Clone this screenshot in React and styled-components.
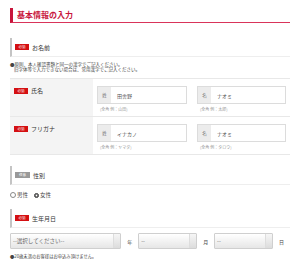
import React from "react";
import styled, { createGlobalStyle } from "styled-components";

const GlobalStyle = createGlobalStyle`
  html, body {
    margin: 0;
    padding: 0;
    background: #fff;
  }
  body {
    font-family: "Noto Sans CJK JP", "Noto Sans", sans-serif;
    color: #333;
  }
`;

const nameRows = [
  {
    label: "氏名",
    fields: [
      { prefix: "姓", value: "田舎野", hint: "(全角 例：山田)" },
      { prefix: "名", value: "ナオミ", hint: "(全角 例：太郎)" },
    ],
  },
  {
    label: "フリガナ",
    fields: [
      { prefix: "姓", value: "イナカノ", hint: "(全角 例：ヤマダ)" },
      { prefix: "名", value: "ナオミ", hint: "(全角 例：タロウ)" },
    ],
  },
];

function App() {
  return (
    <>
      <GlobalStyle />
      <StyledPage>
        <StyledTitle>基本情報の入力</StyledTitle>

        <StyledSectionHead $top={15}>
          <StyledBadge>必須</StyledBadge>
          お名前
        </StyledSectionHead>
        <StyledNotes>
          <p>●原則、本人確認書類と同一の漢字でご記入ください。</p>
          <p>旧字体等で入力できない場合は、常用漢字でご記入ください。</p>
        </StyledNotes>

        <StyledTable>
          {nameRows.map((row) => (
            <StyledRow key={row.label}>
              <StyledLabelCell>
                <StyledBadge>必須</StyledBadge>
                {row.label}
              </StyledLabelCell>
              <StyledFieldCell>
                {row.fields.map((field) => (
                  <div key={field.prefix}>
                    <StyledInput>
                      <StyledPrefix>{field.prefix}</StyledPrefix>
                      <StyledValue>{field.value}</StyledValue>
                    </StyledInput>
                    <StyledHint>{field.hint}</StyledHint>
                  </div>
                ))}
              </StyledFieldCell>
            </StyledRow>
          ))}
        </StyledTable>

        <StyledSectionHead $top={11}>
          <StyledBadge $optional>任意</StyledBadge>
          性別
        </StyledSectionHead>
        <StyledRadios>
          <StyledRadioLabel>
            <StyledRadio />
            男性
          </StyledRadioLabel>
          <StyledRadioLabel>
            <StyledRadio $checked />
            女性
          </StyledRadioLabel>
        </StyledRadios>

        <StyledSectionHead $top={10}>
          <StyledBadge>必須</StyledBadge>
          生年月日
        </StyledSectionHead>
        <StyledSelects>
          <StyledSelect $width={113}>--選択してください--</StyledSelect>
          <StyledUnit>年</StyledUnit>
          <StyledSelect $width={60}>--</StyledSelect>
          <StyledUnit>月</StyledUnit>
          <StyledSelect $width={60}>--</StyledSelect>
          <StyledUnit>日</StyledUnit>
        </StyledSelects>
        <StyledFootNote>●20歳未満のお客様はお申込み頂けません。</StyledFootNote>
      </StyledPage>
    </>
  );
}

export default App;

const StyledPage = styled.div`
  width: 280px;
  padding: 8px 10px 0;
`;

const StyledTitle = styled.h2`
  margin: 0;
  height: 14px;
  border-left: 3px solid #c8163c;
  border-bottom: 1px solid #d9345a;
  padding-left: 4px;
  font-size: 8px;
  line-height: 14px;
  font-weight: 700;
  color: #c8163c;
`;

const StyledSectionHead = styled.div`
  margin-top: ${(p) => p.$top}px;
  height: 18px;
  display: flex;
  align-items: center;
  gap: 3px;
  border-left: 2px solid #c4c4c4;
  border-bottom: 1px solid #eee;
  padding-left: 3px;
  font-size: 6px;
  color: #333;
`;

const StyledBadge = styled.span`
  display: inline-flex;
  align-items: center;
  justify-content: center;
  width: ${(p) => (p.$optional ? 15 : 14)}px;
  height: 6px;
  background: ${(p) => (p.$optional ? "#999" : "#d40f12")};
  color: #fff;
  font-size: 3.5px;
  line-height: 6px;
`;

const StyledNotes = styled.div`
  margin-top: 5px;
  font-size: 4.5px;
  line-height: 5px;
  color: #444;

  p {
    margin: 0;
  }

  p + p {
    padding-left: 4px;
  }
`;

const StyledTable = styled.div`
  margin-top: 6px;
`;

const StyledRow = styled.div`
  display: flex;
  border-top: 1px solid #e8e8e8;

  &:last-child {
    border-bottom: 1px solid #e8e8e8;
  }
`;

const StyledLabelCell = styled.div`
  width: 79px;
  padding: 8px 0 0 4px;
  background: #f4f4f4;
  display: flex;
  align-items: flex-start;
  gap: 3px;
  font-size: 6px;
  line-height: 7px;
  color: #333;

  ${StyledBadge} {
    margin-top: 0.5px;
  }
`;

const StyledFieldCell = styled.div`
  flex: 1;
  display: grid;
  grid-template-columns: 90px 89px;
  column-gap: 10px;
  padding: 7px 0 4px 4px;
`;

const StyledInput = styled.div`
  height: 16px;
  display: flex;
  align-items: stretch;
  border: 1px solid #dcdcdc;
  background: #fff;
`;

const StyledPrefix = styled.span`
  width: 13px;
  display: flex;
  align-items: center;
  justify-content: center;
  background: #ececec;
  font-size: 4.5px;
  color: #777;
`;

const StyledValue = styled.span`
  display: flex;
  align-items: center;
  padding-left: 6px;
  font-size: 5px;
  color: #555;
`;

const StyledHint = styled.div`
  margin-top: 2px;
  padding-left: 3px;
  font-size: 4px;
  line-height: 6px;
  color: #999;
`;

const StyledRadios = styled.div`
  display: flex;
  gap: 6px;
  margin-top: 6px;
  height: 8px;
  align-items: center;
`;

const StyledRadioLabel = styled.label`
  display: flex;
  align-items: center;
  gap: 1px;
  font-size: 5.5px;
  color: #444;
`;

const StyledRadio = styled.span`
  width: ${(p) => (p.$checked ? 3 : 4)}px;
  height: ${(p) => (p.$checked ? 3 : 4)}px;
  border-radius: 50%;
  border: ${(p) => (p.$checked ? "1.5px solid #333" : "0.7px solid #888")};
  background: ${(p) => (p.$checked ? "#fff" : "#fff")};
  box-shadow: ${(p) => (p.$checked ? "inset 0 0 0 0.6px #333" : "none")};
`;

const StyledSelects = styled.div`
  display: flex;
  align-items: center;
  margin-top: 5px;
`;

const StyledSelect = styled.div`
  position: relative;
  width: ${(p) => p.$width}px;
  height: 16px;
  box-sizing: border-box;
  border: 1px solid #cfcfcf;
  border-radius: 1px;
  background: linear-gradient(#ffffff, #e6e6e6);
  padding-left: 2px;
  display: flex;
  align-items: center;
  font-size: 5.5px;
  color: #666;

  &::after {
    content: "";
    position: absolute;
    right: 0;
    top: 0;
    bottom: 0;
    width: 6px;
    border-left: 1px solid #ddd;
    background: linear-gradient(#f6f6f6, #dcdcdc);
  }
`;

const StyledUnit = styled.span`
  width: 17px;
  text-align: center;
  font-size: 5px;
  color: #444;
`;

const StyledFootNote = styled.p`
  margin: 4px 0 0;
  font-size: 4.3px;
  line-height: 6px;
  color: #444;
`;
